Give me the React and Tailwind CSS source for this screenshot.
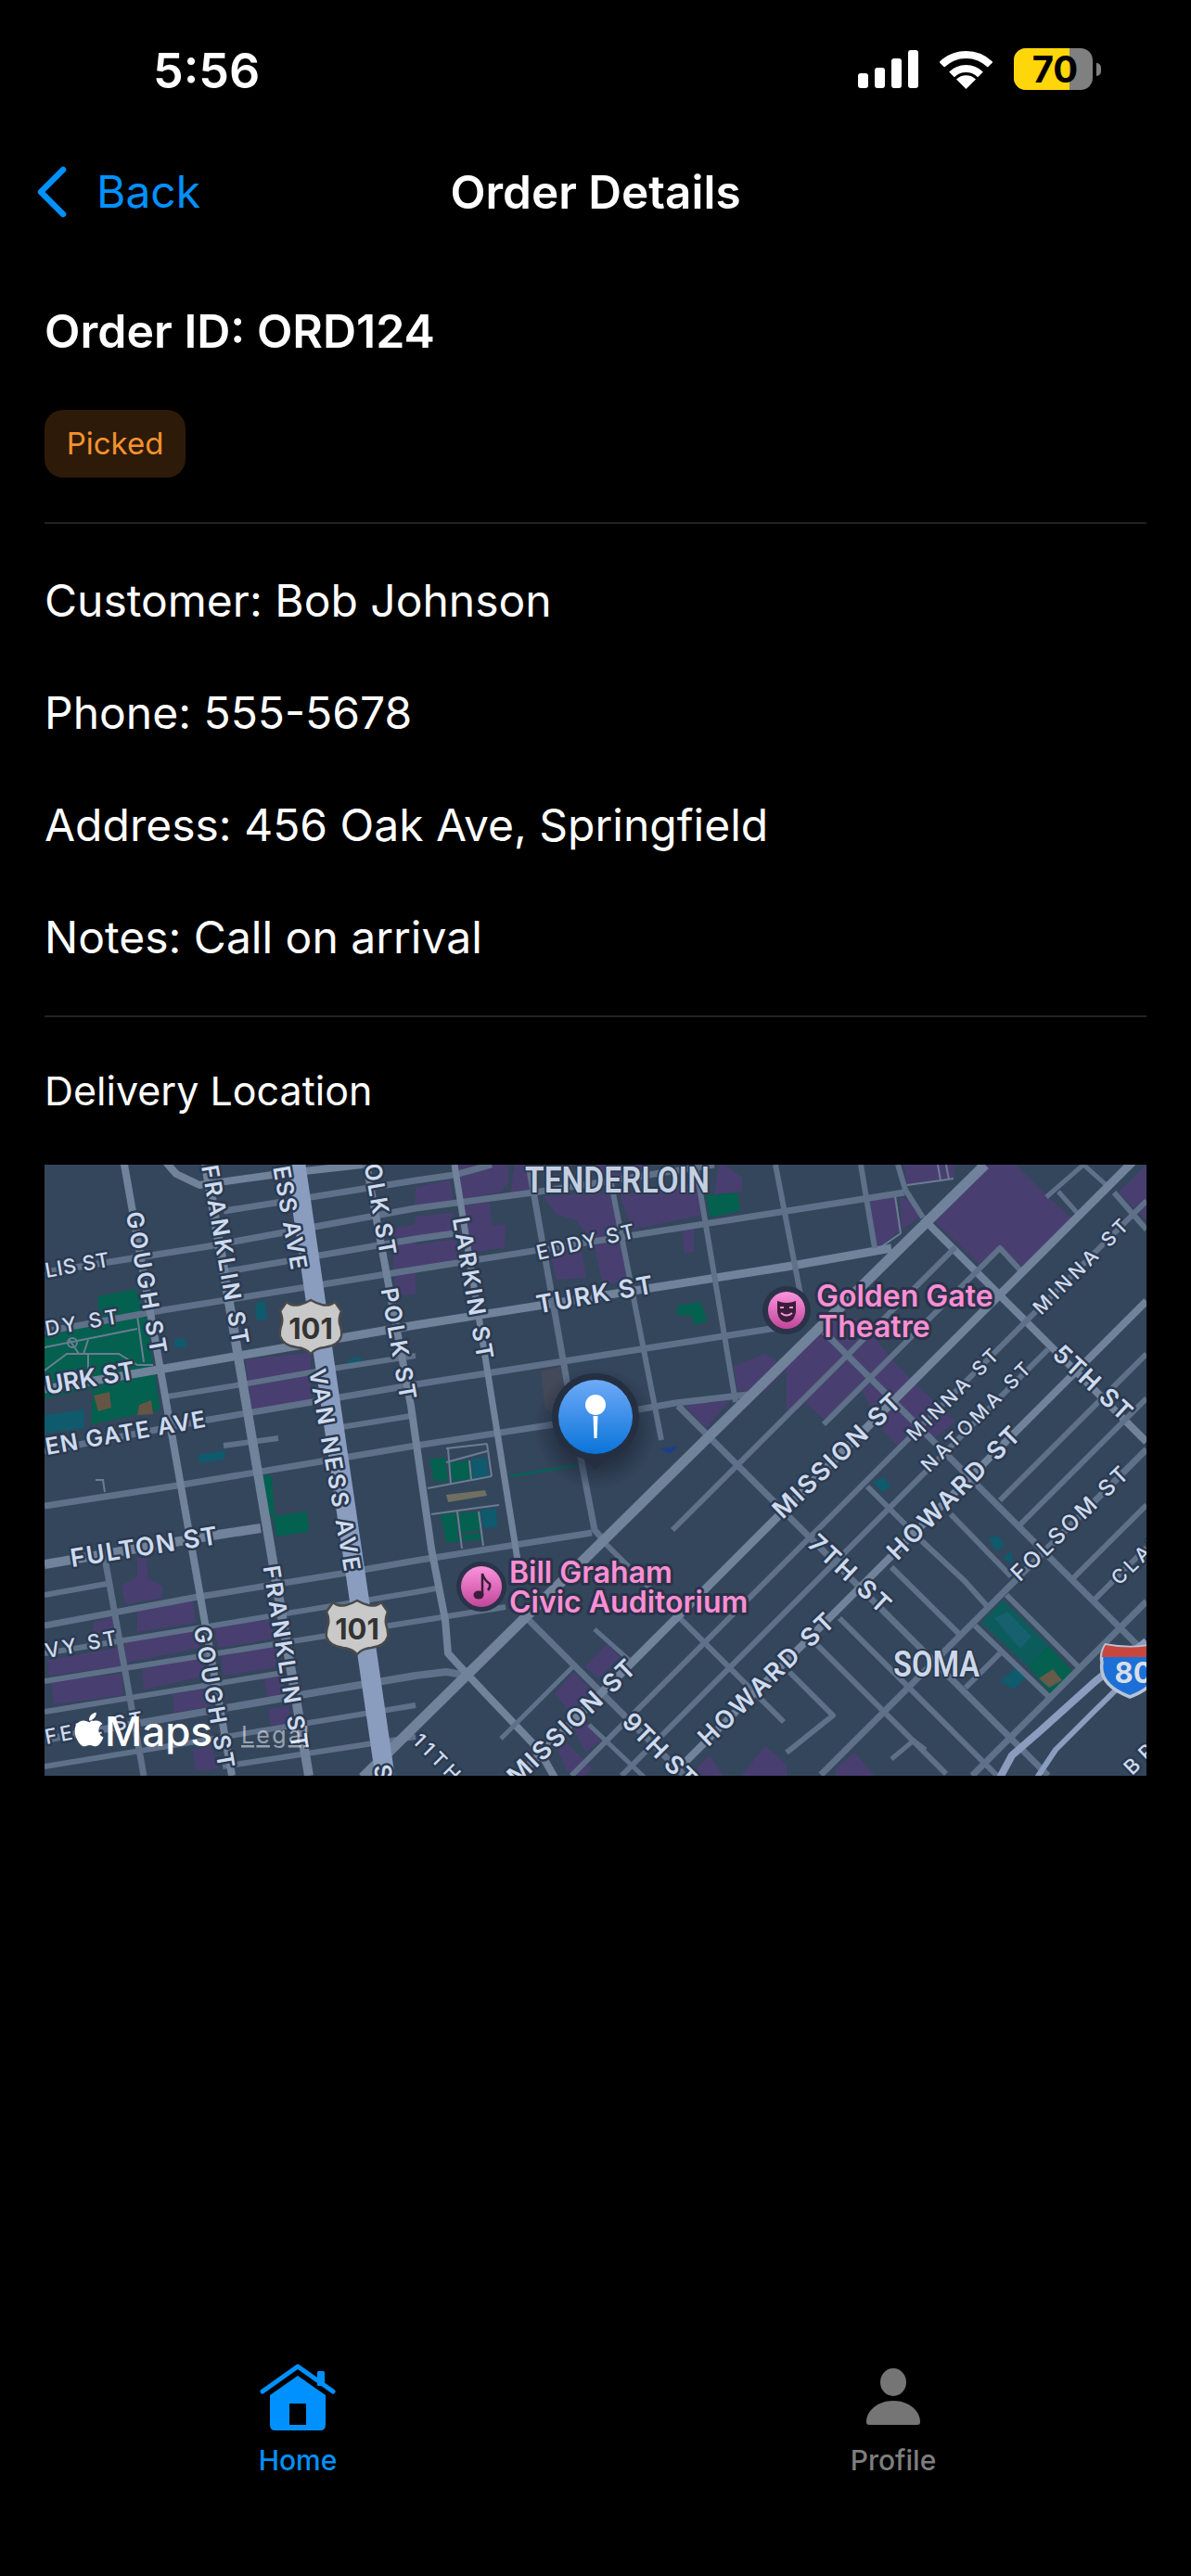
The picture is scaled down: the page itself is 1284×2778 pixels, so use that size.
import React from "react";
import { FaApple } from "react-icons/fa";

const FONT = "font-['Inter','Noto_Sans',sans-serif]";

const MINOR = "#5f7089";
const MID = "#71829b";
const HWY = "#8a9dbf";

// every map coordinate is the page pixel, viewBox starts at the map's corner
const roads = [
  // east-west rows
  [8, MID, "176,1250 190,1266 215,1278 301,1266 391,1256"],
  [7, MINOR, "241,1306 448,1273 490,1267 530,1256"],
  [7, MINOR, "48,1372 225,1344 448,1303 575,1286 680,1270 770,1256"],
  [7, MINOR, "245,1371 448,1336 490,1330"],
  [7, MINOR, "48,1436 175,1413 448,1369 848,1306 975,1286"],
  [9, MID, "48,1498 148,1481 448,1429 848,1366 961,1346"],
  [6, MINOR, "181,1506 255,1494 358,1476 448,1462"],
  [7, MINOR, "48,1565 225,1531 448,1493 831,1433 860,1428"],
  [6, MINOR, "241,1559 300,1551"],
  [6, MINOR, "368,1539 443,1527"],
  [7, MINOR, "48,1624 185,1603 448,1559 598,1536 728,1513 815,1503"],
  [10, MID, "48,1687 235,1655 281,1648"],
  [6, MINOR, "48,1720 115,1708"],
  [7, MINOR, "48,1753 208,1723 368,1697 448,1683 638,1653"],
  [6, MINOR, "48,1783 448,1717 470,1713"],
  [6, MINOR, "48,1813 545,1733"],
  [6, MINOR, "48,1846 305,1804"],
  [8, MINOR, "48,1876 341,1825 448,1807 481,1803 505,1807"],
  [6, MINOR, "48,1905 448,1839"],
  [6, MINOR, "240,1905 448,1873"],
  // north-south streets
  [8, MID, "133,1250 250,1915"],
  [10, MID, "221,1250 333,1915"],
  [8, MID, "395,1256 443,1516 465,1670 480,1747 483,1783 505,1807 581,1887 598,1917"],
  [7, MID, "490,1256 560,1695"],
  [7, MINOR, "570,1256 611,1489 627,1577 641,1650 650,1660"],
  [6, MINOR, "655,1256 713,1553"],
  [6, MINOR, "750,1256 793,1512"],
  [6, MINOR, "836,1256 863,1396"],
  [6, MINOR, "928,1256 943,1346"],
  [6, MINOR, "968,1256 976,1283 995,1313"],
  [7, MINOR, "113,1680 155,1915"],
  // north-west to south-east
  [8, MID, "995,1314 1236,1555"],
  [7, MINOR, "731,1516 1130,1915"],
  [7, MINOR, "888,1436 1236,1784"],
  [6, MINOR, "961,1690 1035,1763"],
  [6, MINOR, "935,1603 995,1663 1040,1705 1065,1733"],
  [6, MINOR, "1025,1633 1090,1700"],
  [6, MINOR, "1085,1720 1162,1797"],
  [6, MINOR, "1051,1753 1131,1830"],
  [6, MINOR, "905,1745 1075,1915"],
  [6, MINOR, "870,1763 1020,1913"],
  [6, MINOR, "648,1660 845,1857"],
  [6, MINOR, "851,1803 898,1850 848,1890"],
  [7, MINOR, "568,1745 738,1915"],
  [5, MINOR, "641,1757 678,1790"],
  [5, MINOR, "635,1860 695,1917"],
  [6, MINOR, "1201,1286 1236,1326"],
  [5, MINOR, "1141,1285 1163,1310"],
  [5, MINOR, "1128,1291 1168,1256 1195,1280"],
  [5, MINOR, "961,1897 985,1877 998,1887"],
  // north-east to south-west
  [6, MINOR, "725,1650 1030,1345"],
  [6, MINOR, "888,1536 1078,1346 1101,1371"],
  [5, MINOR, "540,1875 620,1795"],
  [6, MINOR, "1236,1295 616,1915"],
  [6, MINOR, "1130,1455 670,1915"],
  [8, MID, "1236,1403 724,1915"],
  [6, MINOR, "1236,1460 1078,1618"],
  [6, MINOR, "1236,1508 1100,1644"],
  [7, MINOR, "1236,1563 885,1914"],
  [6, MINOR, "1236,1623 1155,1704"],
  [6, MINOR, "1236,1669 1180,1725"],
  [7, MINOR, "1236,1727 1048,1915"],
  [6, MINOR, "1041,1820 1078,1783"],
  [9, MID, "1236,1238 555,1919"],
  [11, MID, "1062,1256 391,1917"],
  // highways
  [21, HWY, "318,1250 415,1915"],
  [8, HWY, "1078,1917 1091,1893 1121,1867 1181,1813 1236,1770"],
  [6, HWY, "1118,1917 1138,1887 1175,1850 1236,1790"],
];

const thinPaths = [
  "48,1453 148,1433", "148,1419 155,1469", "48,1478 72,1460 128,1460 148,1472 165,1472",
  "75,1445 85,1460 95,1460 95,1478", "95,1445 90,1460",
  "461,1605 530,1592", "465,1633 538,1623", "481,1562 525,1557", "530,1592 525,1557",
  "481,1577 525,1565", "506,1575 508,1595", "483,1562 486,1600", "493,1630 498,1670", "516,1630 521,1667",
  "103,1596 111,1596 113,1609",
  "978,1278 1028,1271", "1011,1256 1014,1273", "1020,1256 1023,1272", "965,1290 971,1330", "948,1346 971,1330",
];

const purple = [
  "265,1466 335,1459 335,1513 271,1519",
  "448,1280 485,1273 490,1300 448,1306",
  "491,1256 548,1256 548,1276 538,1286 498,1293",
  "448,1312 488,1308 490,1332 448,1338",
  "448,1343 492,1336 495,1360 448,1368",
  "500,1298 528,1296 530,1322 545,1320 544,1345 505,1352",
  "424,1325 448,1320 448,1396 426,1396 424,1360",
  "586,1290 660,1286 680,1380 650,1386 640,1340 620,1315 600,1310",
  "592,1345 625,1338 632,1378 600,1380",
  "668,1289 755,1275 758,1310 682,1326",
  "735,1325 748,1323 748,1350 738,1352",
  "555,1256 575,1256 578,1283 550,1288",
  "640,1256 700,1256 700,1268 645,1276",
  "775,1256 780,1256 800,1270 800,1285 770,1288",
  "1005,1314 1062,1256 1095,1256 1128,1289 1158,1316 1105,1369 1078,1346 1055,1363",
  "1206,1286 1236,1256 1236,1316",
  "975,1256 1030,1256 1028,1271 978,1278",
  "938,1293 965,1289 971,1326 948,1346 941,1346",
  "970,1290 992,1300 990,1313 972,1327",
  "848,1466 900,1414 930,1425 961,1466 1008,1513 1030,1533 1005,1552 975,1550 968,1560 950,1540 930,1500 888,1530 868,1513 848,1530",
  "791,1473 825,1460 848,1476 825,1500 795,1500",
  "738,1516 791,1506 761,1540",
  "148,1680 158,1680 160,1703 175,1710 175,1723 135,1730 131,1710 148,1700",
  "148,1737 208,1727 211,1750 148,1760",
  "101,1750 123,1743 128,1763 100,1767",
  "135,1770 211,1757 215,1777 136,1793",
  "51,1790 128,1777 130,1797 53,1807",
  "153,1800 218,1787 221,1807 155,1822",
  "55,1813 131,1805 133,1828 58,1838",
  "186,1827 225,1820 228,1840 188,1847",
  "231,1753 291,1747 296,1767 235,1777",
  "238,1783 298,1773 303,1797 241,1807",
  "285,1810 305,1807 308,1830 288,1830",
  "290,1843 311,1840 315,1860 291,1860",
  "208,1887 228,1883 235,1907 211,1910",
  "598,1827 618,1803 638,1823 615,1847",
  "631,1797 655,1773 668,1787 645,1810",
  "618,1863 631,1857 648,1877 631,1890",
  "601,1887 611,1880 638,1907 628,1917 611,1910",
  "751,1907 765,1893 781,1917 758,1917",
  "798,1917 825,1883 848,1903 848,1917",
  "901,1907 921,1890 945,1917 901,1917",
];

const green = [
  "105,1398 146,1390 158,1422 165,1470 173,1520 98,1536 100,1498 48,1508 48,1440 108,1425",
  "283,1590 293,1592 296,1635 331,1630 333,1652 298,1657 294,1635 288,1633",
  "761,1289 795,1286 798,1306 765,1313",
  "730,1408 755,1404 763,1424 748,1429 746,1419 730,1418",
  "463,1573 480,1572 483,1597 468,1598",
  "485,1577 506,1575 508,1595 488,1598",
  "475,1633 491,1632 495,1663 481,1663",
  "493,1632 515,1630 518,1650 496,1653",
  "498,1655 518,1653 520,1660 500,1662",
  "1108,1797 1131,1775 1156,1802 1133,1827",
];

const teal = [
  "48,1526 91,1520 91,1540 48,1546",
  "275,1406 286,1403 288,1423 276,1423",
  "188,1444 200,1443 201,1453 188,1453",
  "375,1466 388,1463 391,1469 376,1470",
  "213,1569 243,1564 241,1574 215,1578",
  "508,1573 525,1572 526,1593 510,1595",
  "518,1628 535,1627 536,1647 521,1648",
  "941,1598 953,1593 960,1603 950,1609",
  "1065,1660 1075,1655 1083,1665 1075,1673",
  "1081,1680 1091,1672 1091,1687",
  "1078,1813 1096,1798 1105,1810 1093,1822",
];

const labels = [
  // t, x, y, angle, length, size, weight
  ["GOUGH ST", 158, 1383, 80, 155, 25, 600],
  ["FRANKLIN ST", 243, 1353, 80, 196, 25, 600],
  ["ESS AVE", 313, 1313, 80, 113, 25, 600],
  ["OLK ST", 410, 1304, 80, 100, 25, 600],
  ["POLK ST", 430, 1449, 80, 122, 25, 600],
  ["LARKIN ST", 510, 1389, 80, 155, 25, 600],
  ["EDDY ST", 631, 1339, -13, 108, 22, 500],
  ["TURK ST", 641, 1396, -10, 127, 27, 600],
  ["LIS ST", 83, 1364, -10, 70, 22, 500],
  ["DY ST", 88, 1426, -10, 80, 22, 500],
  ["URK ST", 97, 1486, -10, 98, 27, 600],
  ["EN GATE AVE", 135, 1545, -10, 175, 25, 600],
  ["FULTON ST", 155, 1668, -9, 160, 27, 600],
  ["VY ST", 87, 1773, -11, 78, 22, 500],
  ["FELL ST", 101, 1863, -11, 107, 22, 500],
  ["VAN NESS AVE", 361, 1585, 80, 221, 25, 600],
  ["FRANKLIN ST", 308, 1787, 81, 200, 25, 600],
  ["GOUGH ST", 231, 1830, 80, 155, 25, 600],
  ["S", 413, 1911, 80, 16, 25, 600],
  ["11TH", 471, 1895, 45, 62, 21, 500],
  ["MISSION ST", 616, 1857, -44, 180, 27, 600],
  ["MISSION ST", 902, 1570, -44, 180, 27, 600],
  ["HOWARD ST", 1028, 1610, -45, 190, 27, 600],
  ["HOWARD ST", 826, 1811, -44, 192, 27, 600],
  ["9TH ST", 711, 1887, 45, 100, 27, 600],
  ["7TH ST", 916, 1697, 43, 110, 27, 600],
  ["5TH ST", 1178, 1491, 43, 105, 27, 600],
  ["MINNA ST", 1165, 1366, -45, 135, 21, 500],
  ["MINNA ST", 1027, 1504, -45, 130, 21, 500],
  ["NATOMA ST", 1052, 1528, -45, 157, 21, 500],
  ["FOLSOM ST", 1153, 1643, -44, 165, 24, 500],
  ["CLARA ST", 1248, 1660, -44, 130, 21, 500],
  ["BRYANT", 1260, 1866, -44, 125, 22, 500],
];

const Shield101 = ({ x, y }) => (
  <g transform={`translate(${x} ${y})`}>
    <path
      d="M-26 -27 Q-20 -22 -12 -24 Q-5 -26 0 -29 Q5 -26 12 -24 Q20 -22 26 -27 L33 -17 Q30 -10 31 -4 Q34 5 33 10 Q30 20 15 22 Q5 23 0 29 Q-5 23 -15 22 Q-30 20 -33 10 Q-34 5 -31 -4 Q-30 -10 -33 -17 Z"
      fill="#c9c9c9"
      stroke="#4a4a4a"
      strokeWidth="2.5"
    />
    <text x="0" y="13" textAnchor="middle" fontSize="31" fontWeight="700" fill="#333333" fontFamily="Inter">
      101
    </text>
  </g>
);

const PoiText = ({ x, y, children }) => (
  <text
    x={x}
    y={y}
    fontFamily="Inter"
    fontSize="32"
    fontWeight="600"
    fill="#fb8ed4"
    stroke="#2a3348"
    strokeWidth="6"
    strokeLinejoin="round"
    paintOrder="stroke"
  >
    {children}
  </text>
);

const MapView = () => (
  <svg viewBox="48 1256 1188 659" className="block w-full h-[659px]">
    <defs>
      <linearGradient id="pinBlue" x1="0" y1="0" x2="0" y2="1">
        <stop offset="0" stopColor="#6eaaf8" />
        <stop offset="1" stopColor="#0a74d9" />
      </linearGradient>
      <linearGradient id="poiPink" x1="0" y1="0" x2="0" y2="1">
        <stop offset="0" stopColor="#fb93dc" />
        <stop offset="1" stopColor="#c2469b" />
      </linearGradient>
      <radialGradient id="pinShadow">
        <stop offset="0.6" stopColor="#1a2233" stopOpacity="0.55" />
        <stop offset="1" stopColor="#1a2233" stopOpacity="0" />
      </radialGradient>
    </defs>

    <rect x="48" y="1256" width="1188" height="659" fill="#34465c" />

    {purple.map((p) => (
      <polygon key={p} points={p} fill="#483f70" />
    ))}
    <polygon points="1058,1750 1081,1725 1131,1775 1108,1797" fill="#0d5c5c" />
    <polygon points="1072,1745 1086,1738 1112,1765 1100,1778" fill="#17606e" />
    {green.map((p) => (
      <polygon key={p} points={p} fill="#04604f" />
    ))}
    {teal.map((p) => (
      <polygon key={p} points={p} fill="#0f5a6c" />
    ))}
    <polygon points="481,1612 523,1607 525,1613 483,1620" fill="#6f6f62" />
    <polygon points="101,1505 118,1501 120,1518 106,1522" fill="#655544" />
    <polygon points="150,1515 163,1510 165,1525 148,1526" fill="#655544" />
    <polygon points="1120,1810 1135,1800 1145,1812 1131,1820" fill="#665a4a" />
    <polygon points="583,1479 605,1474 608,1493 595,1523 588,1520" fill="#44495a" />
    <polygon points="711,1562 731,1560 723,1568" fill="#1d3f8a" />
    <line x1="550" y1="1592" x2="623" y2="1580" stroke="#0a5f59" strokeWidth="3" />

    {thinPaths.map((p) => (
      <polyline key={p} points={p} fill="none" stroke="#6b7d92" strokeWidth="2" />
    ))}
    <circle cx="78" cy="1448" r="5" fill="none" stroke="#6b7d92" strokeWidth="2" />

    {roads.map(([w, c, p]) => (
      <polyline key={p} points={p} fill="none" stroke={c} strokeWidth={w} strokeLinejoin="round" />
    ))}

    {labels.map(([t, x, y, a, len, size, weight]) => (
      <text
        key={t + x}
        transform={`translate(${x} ${y}) rotate(${a})`}
        textAnchor="middle"
        dominantBaseline="central"
        textLength={len}
        fontFamily="Inter"
        fontSize={size}
        fontWeight={weight}
        fill="#cfdbee"
        stroke="#2b3a50"
        strokeWidth="5"
        strokeLinejoin="round"
        paintOrder="stroke"
      >
        {t}
      </text>
    ))}

    {/* neighbourhood names are a condensed face, so squeeze Roboto to width */}
    <text
      x="566"
      y="1286"
      textLength="199"
      lengthAdjust="spacingAndGlyphs"
      fontFamily="Roboto"
      fontSize="38"
      fontWeight="600"
      fill="#c3d0e2"
      stroke="#2b3a50"
      strokeWidth="4"
      strokeLinejoin="round"
      paintOrder="stroke"
    >
      TENDERLOIN
    </text>
    <text
      x="963"
      y="1808"
      textLength="93"
      lengthAdjust="spacingAndGlyphs"
      fontFamily="Roboto"
      fontSize="38"
      fontWeight="600"
      fill="#cdd8e8"
      stroke="#2b3a50"
      strokeWidth="4"
      strokeLinejoin="round"
      paintOrder="stroke"
    >
      SOMA
    </text>

    <Shield101 x={335} y={1431} />
    <Shield101 x={385} y={1755} />

    {/* I-80 */}
    <g transform="translate(1218 1801)">
      <path d="M-26 -27 Q0 -22 26 -27 Q32 -18 30 -8 Q34 16 0 29 Q-34 16 -30 -8 Q-32 -18 -26 -27 Z" fill="#1d6fd8" stroke="#b8c4d4" strokeWidth="3.5" />
      <path d="M-26 -27 Q0 -22 26 -27 Q30 -21 30 -14 L-30 -14 Q-30 -21 -26 -27 Z" fill="#c9463f" />
      <text x="4" y="14" textAnchor="middle" fontSize="31" fontWeight="700" fill="#d8dee6" fontFamily="Inter">
        80
      </text>
    </g>

    {/* Golden Gate Theatre */}
    <circle cx="848" cy="1413" r="26" fill="#2a3348" />
    <circle cx="848" cy="1413" r="20" fill="url(#poiPink)" />
    <path d="M838 1403 Q848 1407 858 1403 L858 1415 Q856 1426 848 1426 Q840 1426 838 1415 Z" fill="#3a1d38" />
    <path d="M842 1416 Q848 1421 854 1416" fill="none" stroke="#fb93dc" strokeWidth="2" />
    <line x1="841" y1="1410" x2="845" y2="1410" stroke="#fb93dc" strokeWidth="2" />
    <line x1="851" y1="1410" x2="855" y2="1410" stroke="#fb93dc" strokeWidth="2" />
    <PoiText x={880} y={1409}>Golden Gate</PoiText>
    <PoiText x={882} y={1442}>Theatre</PoiText>

    {/* Bill Graham */}
    <circle cx="519" cy="1711" r="27" fill="#2a3348" />
    <circle cx="519" cy="1711" r="22" fill="url(#poiPink)" />
    <ellipse cx="516" cy="1720" rx="5.5" ry="4.5" fill="#3a1d38" />
    <path d="M520 1720 L520 1697 Q522 1704 528 1708 Q529 1712 526 1715" fill="none" stroke="#3a1d38" strokeWidth="2.5" />
    <PoiText x={549} y={1707}>Bill Graham</PoiText>
    <PoiText x={549} y={1739}>Civic Auditorium</PoiText>

    {/* location pin */}
    <circle cx="642" cy="1540" r="66" fill="url(#pinShadow)" />
    <circle cx="642" cy="1528" r="47" fill="#242f42" />
    <polygon points="628,1572 656,1572 641,1585" fill="#242f42" />
    <circle cx="642" cy="1528" r="40" fill="url(#pinBlue)" />
    <circle cx="642" cy="1515" r="11" fill="#ffffff" />
    <polygon points="639.5,1527 644.5,1527 643.5,1551 640.5,1551" fill="#ffffff" />

    {/* Apple Maps mark */}
    <FaApple x="75" y="1844" size={42} color="#ffffff" />
    <text x="113" y="1883" fontFamily="Inter" fontSize="44" fontWeight="500" fill="#ffffff">
      Maps
    </text>
    <text x="260" y="1880" textLength="73" fontFamily="Inter" fontSize="25" fontWeight="400" fill="#ffffff" fillOpacity="0.5" textDecoration="underline">
      Legal
    </text>
  </svg>
);

const StatusIcons = () => (
  <div className="flex items-center">
    <div className="flex items-end gap-[7px] h-[41px]">
      <div className="w-[11px] h-[16px] rounded-[3px] bg-white" />
      <div className="w-[11px] h-[22px] rounded-[3px] bg-white" />
      <div className="w-[11px] h-[32px] rounded-[3px] bg-white" />
      <div className="w-[11px] h-[41px] rounded-[3px] bg-white" />
    </div>
    <svg width="57" height="42" viewBox="0 0 57 42" className="ml-[23px]">
      <path d="M2.3 15.8 A37 37 0 0 1 54.7 15.8" fill="none" stroke="white" strokeWidth="8" />
      <path d="M13 26.4 A22 22 0 0 1 44 26.4" fill="none" stroke="white" strokeWidth="8" />
      <path d="M28.5 42 L18 31.5 A15 15 0 0 1 39 31.5 Z" fill="white" />
    </svg>
    <div className="ml-[23px] relative w-[85px] h-[45px] rounded-[13px] bg-[#808080] overflow-hidden">
      <div className="h-full w-[60px] bg-[#ffd60a]" />
      <span className="absolute inset-0 flex items-center justify-center pl-[4px] text-[40px] leading-none font-bold text-black">
        70
      </span>
    </div>
    <div className="ml-[4px] w-[5px] h-[14px] rounded-r-full bg-[#808080]" />
  </div>
);

const HomeIcon = () => (
  <svg width="82" height="72" viewBox="0 0 82 72">
    <path d="M3 30 L41 3 L79 30" fill="none" stroke="#0091ff" strokeWidth="5" strokeLinecap="round" strokeLinejoin="round" />
    <rect x="62" y="8" width="8" height="16" rx="1.5" fill="#0091ff" />
    <path fillRule="evenodd" d="M41 13 L71 34 L71 66 Q71 72 65 72 L17 72 Q11 72 11 66 L11 34 Z M32 44 L32 66 L50 66 L50 44 Q50 43 49 43 L33 43 Q32 43 32 44 Z" fill="#0091ff" />
  </svg>
);

const ProfileIcon = () => (
  <svg width="58" height="62" viewBox="0 0 58 62">
    <ellipse cx="29" cy="15" rx="14" ry="15" fill="#757575" />
    <path d="M0 58 C0 46 12 35 29 35 C46 35 58 46 58 58 Q58 61 55 61 L3 61 Q0 61 0 58 Z" fill="#757575" />
  </svg>
);

export default function App() {
  const details = ["Customer: Bob Johnson", "Phone: 555-5678", "Address: 456 Oak Ave, Springfield", "Notes: Call on arrival"];

  return (
    <div className={`${FONT} w-[1284px] h-[2778px] bg-black text-white flex flex-col`}>
      {/* Status bar */}
      <div className="h-[142px] flex items-start justify-between pl-[165px] pr-[97px] pt-[47px]">
        <span className="text-[52px] leading-[60px] font-semibold">5:56</span>
        <div className="pt-[5px]">
          <StatusIcons />
        </div>
      </div>

      {/* Nav */}
      <div className="h-[130px] grid grid-cols-[1fr_auto_1fr] items-center">
        <div className="flex items-center pl-[39px]">
          <svg width="33" height="56" viewBox="0 0 33 56">
            <path d="M29 4 L5 28 L29 52" fill="none" stroke="#0091ff" strokeWidth="6.5" strokeLinecap="round" strokeLinejoin="round" />
          </svg>
          <span className="ml-[32px] text-[48px] leading-[60px] text-[#0091ff]">Back</span>
        </div>
        <span className="text-[49.5px] leading-[60px] font-semibold">Order Details</span>
        <div />
      </div>

      {/* Content */}
      <div className="px-12 flex flex-col">
        <h1 className="mt-[55px] text-[50px] leading-[60px] font-semibold">Order ID: ORD124</h1>
        <div className="mt-[55px] self-start h-[73px] w-[152px] rounded-[20px] bg-[#2d1a08] flex items-center justify-center">
          <span className="text-[33px] text-[#f4922f]">Picked</span>
        </div>
        <div className="mt-[48px] h-[2px] bg-[#222222]" />
        <div className="mt-[53px] flex flex-col gap-[61px]">
          {details.map((line) => (
            <p key={line} className="text-[48px] leading-[60px]">
              {line}
            </p>
          ))}
        </div>
        <div className="mt-[54px] h-[2px] bg-[#222222]" />
        <h2 className="mt-[51px] text-[43px] leading-[56px]">Delivery Location</h2>
        <div className="mt-[52px]">
          <MapView />
        </div>
      </div>

      {/* Tab bar */}
      <div className="mt-auto grid grid-cols-2 pb-[107px]">
        <div className="flex flex-col items-center">
          <div className="h-[72px] flex items-center">
            <HomeIcon />
          </div>
          <span className="mt-[14px] text-[30px] leading-[36px] font-medium text-[#0091ff]">Home</span>
        </div>
        <div className="flex flex-col items-center">
          <div className="h-[72px] flex items-center">
            <ProfileIcon />
          </div>
          <span className="mt-[14px] text-[30px] leading-[36px] font-medium text-[#7e7e7e]">Profile</span>
        </div>
      </div>
    </div>
  );
}
